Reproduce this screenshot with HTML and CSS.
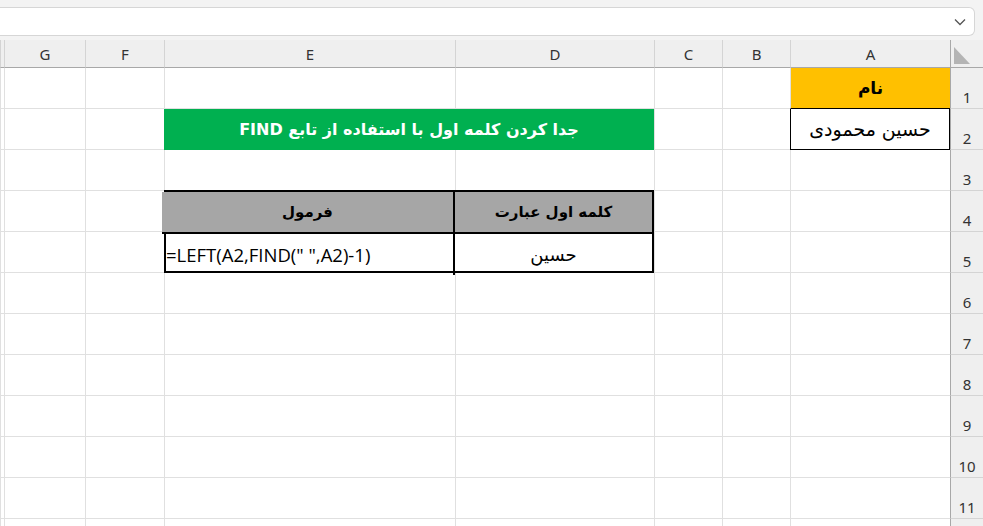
FILE: index.html
```html
<!DOCTYPE html>
<html lang="fa">
<head>
    <meta charset="UTF-8">
    <meta name="viewport" content="width=device-width, initial-scale=1.0">
    <title>FIND - کلمه اول</title>
    <link rel="stylesheet" href="styles.css">
</head>
<body>

    <div class="formula-bar">
        <div class="formula-input">
            <svg class="chevron" width="12" height="8" viewBox="0 0 12 8">
                <polyline points="1,1.5 6,6.5 11,1.5" fill="none" stroke="#555" stroke-width="1.3"/>
            </svg>
        </div>
    </div>

    <div class="sheet" id="sheet" dir="rtl">
        <div class="corner"><span class="select-all"></span></div>

        <div class="cell a1">نام</div>
        <div class="cell a2">حسین محمودی</div>

        <div class="cell title">جدا کردن کلمه اول با استفاده از تابع FIND</div>

        <div class="results">
            <div class="res-head">کلمه اول عبارت</div>
            <div class="res-head">فرمول</div>
            <div class="res-cell">حسین</div>
            <div class="res-cell formula"><span dir="ltr">=LEFT(A2,FIND(" ",A2)-1)</span></div>
        </div>
    </div>

    <script>
        var columns = ['A', 'B', 'C', 'D', 'E', 'F', 'G', ''];
        var visibleRows = 11;
        var sheet = document.getElementById('sheet');

        function place(el, row, col) {
            el.style.gridRow = row;
            el.style.gridColumn = col;
            sheet.appendChild(el);
        }

        // header row (corner is already in the markup)
        for (var i = 0; i < columns.length; i++) {
            var head = document.createElement('div');
            head.className = 'col-head';
            head.textContent = columns[i];
            place(head, 1, i + 2);
        }

        // empty grid, the filled cells above sit on top of it.
        // one extra row at the bottom is only partly on screen.
        for (var r = 1; r <= visibleRows + 1; r++) {
            var num = document.createElement('div');
            num.className = 'row-head';
            if (r <= visibleRows) {
                num.textContent = r;
            }
            place(num, r + 1, 1);

            for (var c = 0; c < columns.length; c++) {
                var cell = document.createElement('div');
                cell.className = 'cell';
                place(cell, r + 1, c + 2);
            }
        }
    </script>

</body>
</html>
```

FILE: styles.css
```css
body {
    margin: 0;
    padding: 0;
    background-color: #fff;
    font-family: "Noto Sans", "DejaVu Sans", sans-serif;
    overflow: hidden;
}

.formula-bar {
    height: 40px;
    background-color: #f3f3f3;
    padding: 7px 8px 4px 0;
    box-sizing: border-box;
    display: flex;
}

.formula-input {
    flex: 1;
    background-color: #fff;
    border: 1px solid #d6d6d6;
    border-left: none;
    border-radius: 0 6px 6px 0;
    display: flex;
    align-items: center;
    justify-content: flex-end;
    padding-right: 8px;
}

.sheet {
    display: grid;
    grid-template-columns: 33px 160px 68px 68px 199px 291px 79px 81px 4px;
    grid-template-rows: 28px repeat(12, 41px);
    height: 486px;
    overflow: hidden;
}

.sheet > div {
    box-sizing: border-box;
}

.corner {
    grid-row: 1;
    grid-column: 1;
    background-color: #efefef;
    border-left: 1px solid #a8a8a8;
    border-bottom: 1px solid #a8a8a8;
    position: relative;
}

.select-all {
    position: absolute;
    left: 3px;
    bottom: 3px;
    width: 0;
    height: 0;
    border-bottom: 17px solid #b4b4b4;
    border-right: 16px solid transparent;
}

.col-head {
    background-color: #efefef;
    border-left: 1px solid #d4d4d4;
    border-bottom: 1px solid #a8a8a8;
    color: #333;
    font-size: 15px;
    display: flex;
    align-items: center;
    justify-content: center;
}

.row-head {
    background-color: #efefef;
    border-left: 1px solid #a8a8a8;
    border-bottom: 1px solid #d4d4d4;
    color: #333;
    font-size: 15px;
    display: flex;
    align-items: flex-end;
    justify-content: center;
    padding-bottom: 1px;
}

.cell {
    border-left: 1px solid #e0e0e0;
    border-bottom: 1px solid #e0e0e0;
}

.a1,
.a2,
.title,
.results {
    z-index: 1;
}

.a1,
.a2,
.title {
    display: flex;
    align-items: center;
    justify-content: center;
    font-family: "DejaVu Sans", sans-serif;
}

.a1 {
    grid-row: 2;
    grid-column: 2;
    background-color: #ffc000;
    border-bottom: 1px solid #000;
    font-weight: bold;
    font-size: 17px;
}

.a2 {
    grid-row: 3;
    grid-column: 2;
    background-color: #fff;
    border: 1px solid #000;
    border-top: none;
    font-size: 19px;
}

.title {
    grid-row: 3;
    grid-column: 5 / span 2;
    background-color: #00b050;
    border: none;
    color: #fff;
    font-weight: bold;
    font-size: 16px;
}

.results {
    grid-row: 5 / span 2;
    grid-column: 5 / span 2;
    display: grid;
    grid-template-columns: 199px 291px;
    grid-template-rows: 42px 41px;
    margin-top: -1px;
    border: 2px solid #000;
    background-color: #fff;
}

.res-head,
.res-cell {
    display: flex;
    align-items: center;
    justify-content: center;
    font-family: "DejaVu Sans", sans-serif;
    font-size: 15px;
}

.res-head {
    background-color: #a6a6a6;
    font-weight: bold;
    border-bottom: 2px solid #000;
}

.res-cell {
    font-size: 18px;
}

.res-head:first-child,
.res-cell:nth-child(3) {
    border-left: 2px solid #000;
}

.formula {
    justify-content: flex-end;
    padding-left: 4px;
    font-family: "Open Sans", sans-serif;
    font-size: 18.5px;
}
```
